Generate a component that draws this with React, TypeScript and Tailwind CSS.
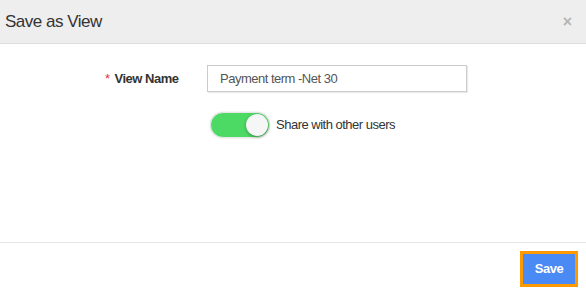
export default function App() {
  return (
    <div className="w-[586px] h-[292px] bg-white flex flex-col" style={{ fontFamily: '"Liberation Sans", Arial, sans-serif' }}>
      <div className="h-[44px] bg-[#eeeeee] border-b border-[#dddddd] flex items-center justify-between pl-[5px] pr-[14px] shrink-0">
        <span className="text-[17px] tracking-[-0.5px] text-[#333333] leading-none">Save as View</span>
        <span className="text-[#b5b5b5] text-[16px] font-bold leading-none">×</span>
      </div>
      <div className="flex-1 pt-[21px]">
        <div className="flex items-center">
          <div className="w-[207px] flex justify-start pl-[105px] text-[13px] tracking-[-0.5px] font-bold text-[#333333]">
            <span className="text-[#e33] mr-[5px] font-normal">*</span>View Name
          </div>
          <div className="w-[260px] h-[27px] border border-[#cccccc] shadow-[1px_1px_1px_rgba(0,0,0,0.08)] flex items-center pl-[12px] text-[13px] tracking-[-0.5px] text-[#555555]">
            Payment term -Net 30
          </div>
        </div>
        <div className="flex items-center mt-[20px] pl-[210px]">
          <div className="w-[60px] h-[26px] rounded-full bg-[#4cd964] border border-[#e6e6e6] relative shadow-[0_0_2px_rgba(0,0,0,0.15)]">
            <div className="absolute right-[1px] top-[1px] w-[22px] h-[22px] rounded-full bg-[#f6f6f6] shadow-[0_1px_3px_rgba(0,0,0,0.35)]" />
          </div>
          <span className="ml-[6px] text-[13px] tracking-[-0.5px] text-[#333333]">Share with other users</span>
        </div>
      </div>
      <div className="h-[50px] border-t border-[#e5e5e5] flex items-start justify-end pr-[8px] pt-[8px] shrink-0">
        <div className="w-[58px] h-[36px] border-[3px] border-[#ff9900] bg-[#4a8af4] flex items-center justify-center text-white text-[13px] tracking-[-0.5px] font-bold">
          Save
        </div>
      </div>
    </div>
  );
}
